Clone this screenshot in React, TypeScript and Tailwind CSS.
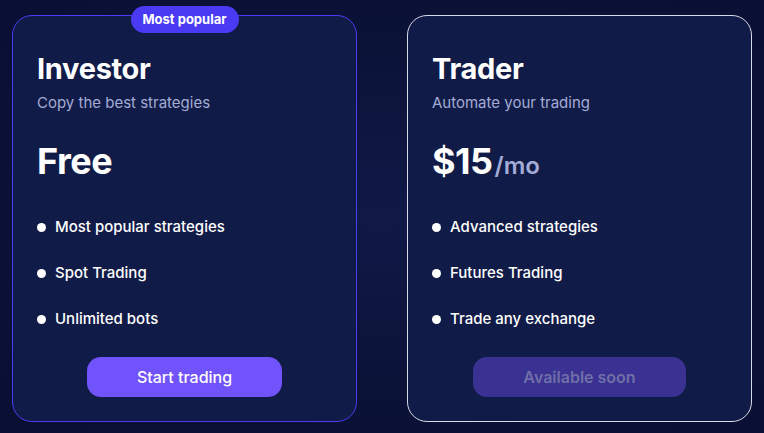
const font = { fontFamily: '"Inter", "Noto Sans", sans-serif' };

type Plan = {
  name: string;
  tagline: string;
  price: string;
  suffix?: string;
  features: string[];
  cta: string;
  popular?: boolean;
};

const plans: Plan[] = [
  {
    name: 'Investor',
    tagline: 'Copy the best strategies',
    price: 'Free',
    features: ['Most popular strategies', 'Spot Trading', 'Unlimited bots'],
    cta: 'Start trading',
    popular: true,
  },
  {
    name: 'Trader',
    tagline: 'Automate your trading',
    price: '$15',
    suffix: '/mo',
    features: ['Advanced strategies', 'Futures Trading', 'Trade any exchange'],
    cta: 'Available soon',
  },
];

function PlanCard({ plan }: { plan: Plan }) {
  return (
    <div
      className={`relative w-[345px] h-[407px] rounded-[20px] border bg-[#111b47] px-[24px] pt-[35px] ${
        plan.popular ? 'border-[#4b3cf2]' : 'border-[#d6d9e6]'
      }`}
    >
      {plan.popular && (
        <div className="absolute left-1/2 top-[-10px] -translate-x-1/2 rounded-full bg-[#4a3af4] px-3 h-[27px] flex items-center text-[13px] font-bold text-white">
          Most popular
        </div>
      )}
      <h2 className="text-[29px] font-bold leading-[36px] text-white tracking-[-0.3px]">{plan.name}</h2>
      <p className="mt-[6px] text-[15px] leading-[20px] text-[#a3acd6]">{plan.tagline}</p>
      <div className="mt-[26px] flex items-baseline h-[44px]">
        <span className="text-[36px] font-bold leading-[44px] text-white tracking-[-0.5px]">{plan.price}</span>
        {plan.suffix && <span className="ml-[2px] text-[24px] font-semibold text-[#a3acd6]">{plan.suffix}</span>}
      </div>
      <ul className="mt-[34px] flex flex-col gap-[26px]">
        {plan.features.map((f) => (
          <li key={f} className="flex items-center gap-[9px] h-[20px] text-[15px] font-medium text-white">
            <span className="w-[9px] h-[9px] rounded-full bg-white" />
            {f}
          </li>
        ))}
      </ul>
      <div className="mt-[28px] flex justify-center">
        <button
          className={`h-[40px] rounded-[14px] px-[50px] text-[16px] font-medium ${
            plan.popular ? 'bg-[#7153fb] text-white' : 'bg-[#3a3192] text-[#6f6fa8] font-semibold'
          }`}
        >
          {plan.cta}
        </button>
      </div>
    </div>
  );
}

export default function App() {
  return (
    <div
      className="w-[764px] h-[433px] overflow-hidden bg-[radial-gradient(ellipse_at_center,#101947_0%,#0b1237_60%,#0a1034_100%)] flex gap-[50px] pl-[12px] pt-[15px]"
      style={font}
    >
      {plans.map((p) => (
        <PlanCard key={p.name} plan={p} />
      ))}
    </div>
  );
}
